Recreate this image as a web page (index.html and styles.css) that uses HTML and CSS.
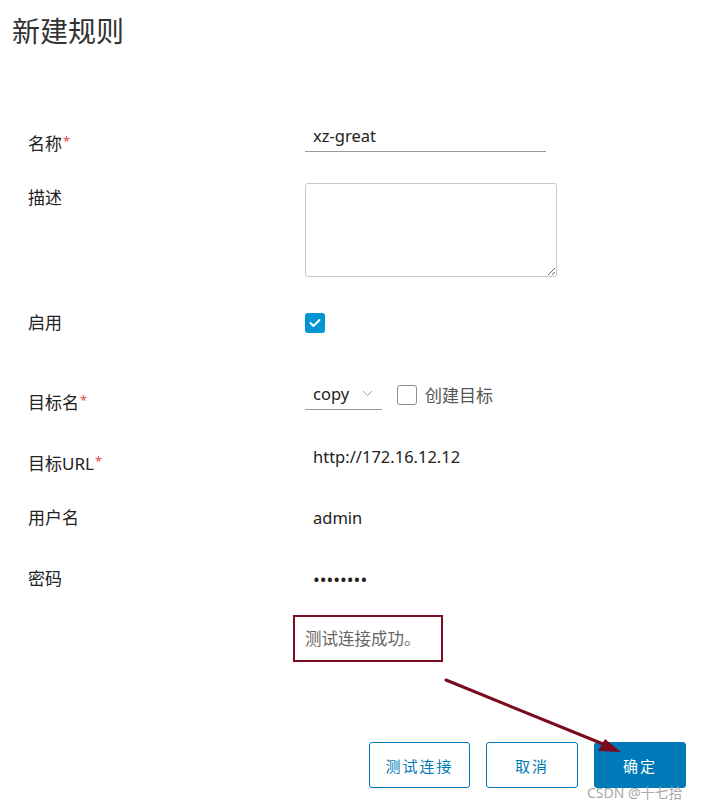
FILE: index.html
```html
<!DOCTYPE html>
<html lang="zh-CN">
<head>
    <meta charset="UTF-8">
    <meta name="viewport" content="width=device-width, initial-scale=1.0">
    <title>新建规则</title>
    <link rel="stylesheet" href="styles.css">
</head>
<body>
    <div class="modal">
        <h1 class="title">新建规则</h1>

        <form class="form">
            <div class="row row-name">
                <label class="label">名称<span class="req">*</span></label>
                <div class="control">
                    <input class="text-input" type="text" value="xz-great">
                </div>
            </div>

            <div class="row row-desc">
                <label class="label">描述</label>
                <div class="control">
                    <textarea class="textarea"></textarea>
                </div>
            </div>

            <div class="row row-enable">
                <label class="label">启用</label>
                <div class="control">
                    <span class="checkbox checked">
                        <svg width="12" height="10" viewBox="0 0 12 10"><polyline points="1.5,5 4.5,8 10.5,2" fill="none" stroke="#fff" stroke-width="2" stroke-linecap="round" stroke-linejoin="round"/></svg>
                    </span>
                </div>
            </div>

            <div class="row row-target">
                <label class="label">目标名<span class="req">*</span></label>
                <div class="control inline">
                    <div class="select">
                        <span>copy</span>
                        <svg width="11" height="7" viewBox="0 0 11 7"><polyline points="1,1 5.5,5.5 10,1" fill="none" stroke="#999" stroke-width="1"/></svg>
                    </div>
                    <span class="checkbox"></span>
                    <span class="check-text">创建目标</span>
                </div>
            </div>

            <div class="row row-url">
                <label class="label">目标URL<span class="req">*</span></label>
                <div class="control">
                    <span class="value">http://172.16.12.12</span>
                </div>
            </div>

            <div class="row row-user">
                <label class="label">用户名</label>
                <div class="control">
                    <span class="value">admin</span>
                </div>
            </div>

            <div class="row row-pass">
                <label class="label">密码</label>
                <div class="control">
                    <span class="value dots">••••••••</span>
                </div>
            </div>

            <div class="message">测试连接成功。</div>

            <div class="actions">
                <button type="button" class="btn btn-outline btn-test">测试连接</button>
                <button type="button" class="btn btn-outline">取消</button>
                <button type="button" class="btn btn-primary">确定</button>
            </div>
        </form>

        <!-- annotation arrow -->
        <svg class="arrow" width="701" height="810" viewBox="0 0 701 810">
            <line x1="446" y1="680" x2="608" y2="746" stroke="#7a0a1e" stroke-width="3" stroke-linecap="round"/>
            <polygon points="621,752 598,751 605,739" fill="#7a0a1e"/>
        </svg>

        <div class="watermark">CSDN @十七拾</div>
    </div>
</body>
</html>
```

FILE: styles.css
```css
body {
    margin: 0;
    padding: 0;
    background-color: #fff;
    font-family: "Noto Sans", "Noto Sans CJK SC", sans-serif;
    color: #222;
}
.modal {
    position: relative;
    width: 701px;
    height: 810px;
    overflow: hidden;
}
.title {
    margin: 0;
    padding: 13px 0 0 12px;
    font-size: 28px;
    line-height: 36px;
    font-weight: 400;
    color: #333;
}
.form {
    margin-top: 73px;
    padding-left: 28px;
}
.row {
    display: flex;
    align-items: flex-start;
}
.label {
    width: 277px;
    flex-shrink: 0;
    font-size: 17px;
    line-height: 24px;
    color: #222;
}
.req {
    color: #e8473c;
    font-size: 13px;
    vertical-align: top;
    line-height: 18px;
    margin-left: 1px;
}
.row-name { height: 61px; }
.row-name .label { padding-top: 10px; }
.row-desc { height: 128px; }
.row-desc .label { padding-top: 3px; }
.row-enable { height: 69px; }
.row-target { height: 65px; }
.row-target .label { padding-top: 11px; }
.row-url { height: 61px; }
.row-url .label { padding-top: 7px; }
.row-user { height: 61px; }
.row-pass { height: 48px; }

.text-input {
    width: 241px;
    height: 30px;
    box-sizing: border-box;
    border: none;
    border-bottom: 1px solid #999;
    padding: 0 8px 2px;
    font-family: inherit;
    font-size: 16.5px;
    color: #222;
    outline: none;
}
.textarea {
    display: block;
    width: 252px;
    height: 94px;
    box-sizing: border-box;
    border: 1px solid #c8c8c8;
    border-radius: 3px;
    margin: 0;
}
.checkbox {
    display: inline-flex;
    align-items: center;
    justify-content: center;
    width: 20px;
    height: 20px;
    box-sizing: border-box;
    border: 1px solid #8c8c8c;
    border-radius: 3px;
    background-color: #fff;
}
.checkbox.checked {
    margin-top: 2px;
    border: none;
    background-color: #0095d3;
}
.inline {
    display: flex;
    align-items: center;
}
.select {
    display: flex;
    align-items: center;
    justify-content: space-between;
    width: 77px;
    height: 30px;
    box-sizing: border-box;
    padding: 0 9px 2px 8px;
    border-bottom: 1px solid #999;
    font-size: 16.5px;
    margin-right: 15px;
}
.check-text {
    margin-left: 8px;
    font-size: 17px;
    color: #555;
    margin-top: -2px;
}
.value {
    display: inline-block;
    padding-left: 8px;
    font-size: 16.5px;
    line-height: 24px;
}
.dots {
    letter-spacing: 0;
    font-size: 18px;
}
.message {
    width: 136px;
    height: 43px;
    margin-left: 265px;
    border: 2px solid #7a0a1e;
    padding-left: 10px;
    font-size: 16.5px;
    line-height: 43px;
    color: #666;
}
.actions {
    display: flex;
    justify-content: flex-end;
    gap: 16px;
    margin-top: 80px;
    padding-right: 15px;
}
.btn {
    height: 46px;
    width: 92px;
    border-radius: 3px;
    font-family: inherit;
    font-size: 15px;
    letter-spacing: 2px;
    cursor: pointer;
}
.btn-test {
    width: 101px;
}
.btn-outline {
    background-color: #fff;
    border: 1px solid #0079b8;
    color: #0079b8;
}
.btn-primary {
    background-color: #0079b8;
    border: 1px solid #0079b8;
    color: #fff;
}
.arrow {
    position: absolute;
    left: 0;
    top: 0;
    pointer-events: none;
}
.watermark {
    position: absolute;
    left: 587px;
    top: 782px;
    font-size: 14px;
    color: #a0a0a0;
    opacity: 0.9;
}
```
